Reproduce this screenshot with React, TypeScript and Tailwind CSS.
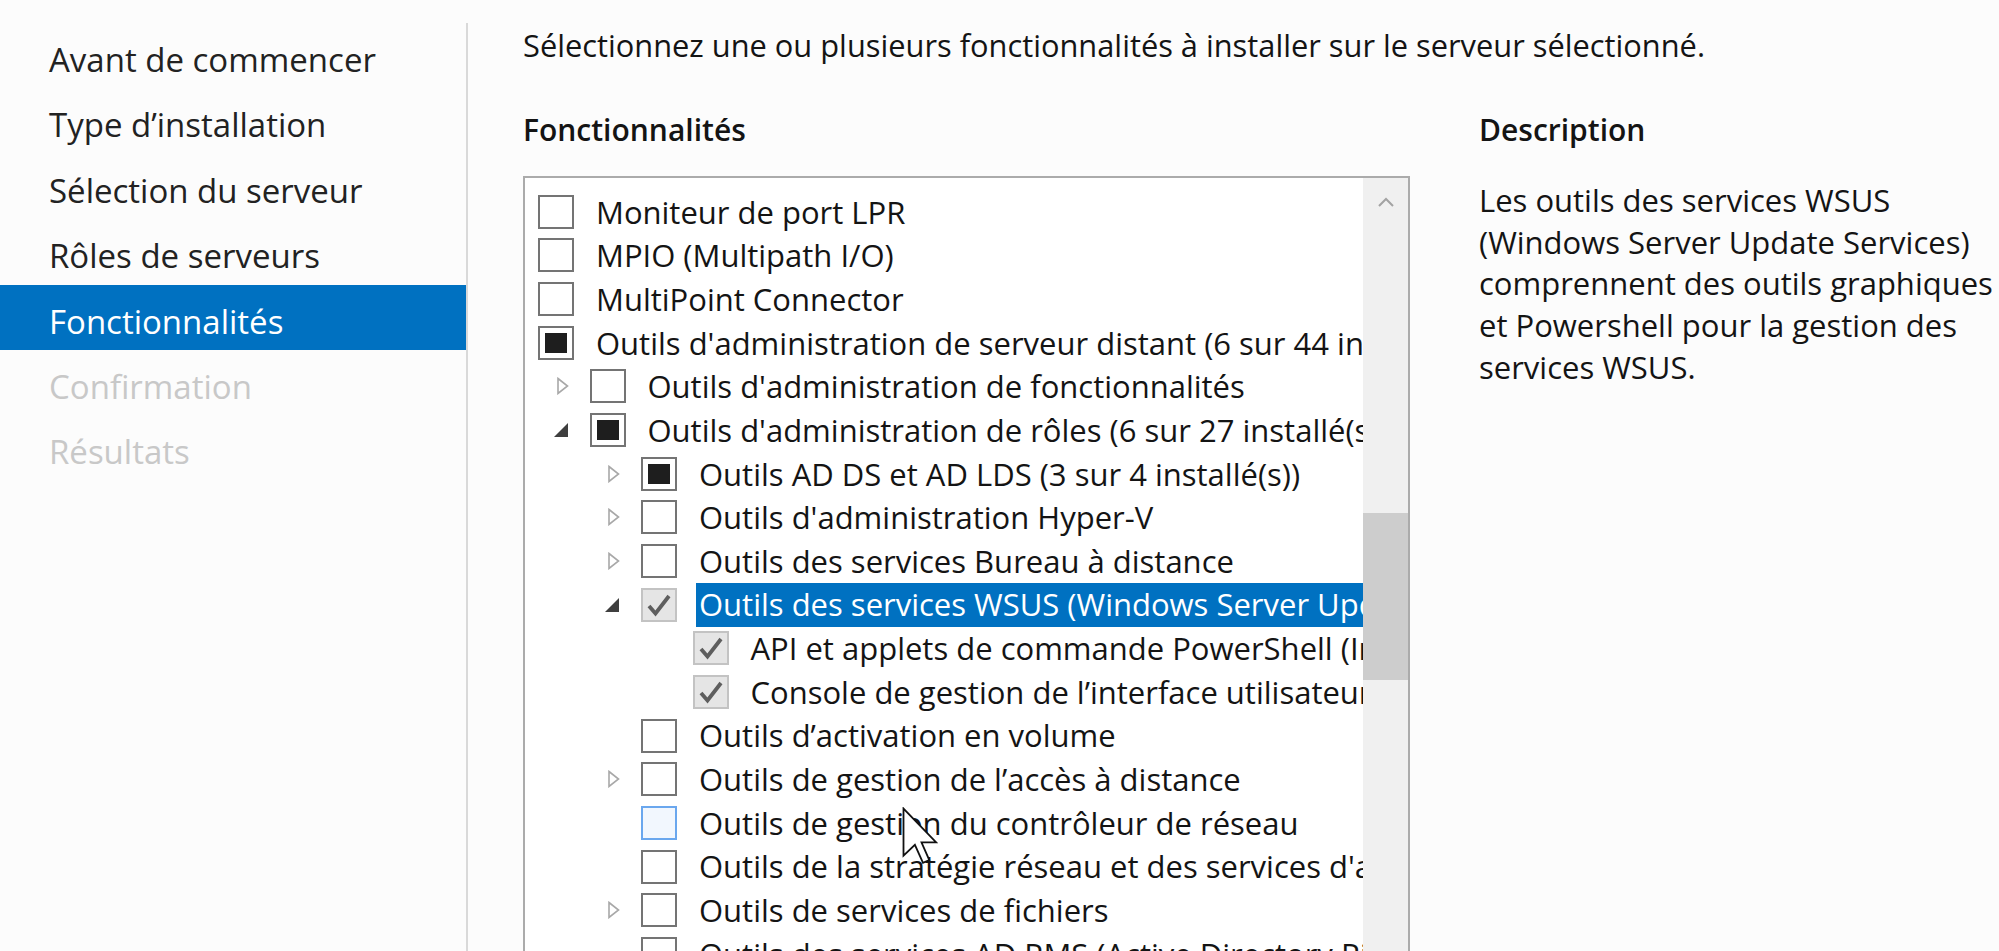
import React from "react";

type Arrow = "none" | "collapsed" | "expanded";
type State = "empty" | "indeterminate" | "checked" | "hover";

interface Row {
  level: 0 | 1 | 2 | 3;
  arrow: Arrow;
  state: State;
  text: string;
  selected?: boolean;
}

const rows: Row[] = [
  { level: 0, arrow: "none", state: "empty", text: "Moniteur de port LPR" },
  { level: 0, arrow: "none", state: "empty", text: "MPIO (Multipath I/O)" },
  { level: 0, arrow: "none", state: "empty", text: "MultiPoint Connector" },
  { level: 0, arrow: "none", state: "indeterminate", text: "Outils d'administration de serveur distant (6 sur 44 installé(s))" },
  { level: 1, arrow: "collapsed", state: "empty", text: "Outils d'administration de fonctionnalités" },
  { level: 1, arrow: "expanded", state: "indeterminate", text: "Outils d'administration de rôles (6 sur 27 installé(s))" },
  { level: 2, arrow: "collapsed", state: "indeterminate", text: "Outils AD DS et AD LDS (3 sur 4 installé(s))" },
  { level: 2, arrow: "collapsed", state: "empty", text: "Outils d'administration Hyper-V" },
  { level: 2, arrow: "collapsed", state: "empty", text: "Outils des services Bureau à distance" },
  { level: 2, arrow: "expanded", state: "checked", text: "Outils des services WSUS (Windows Server Update Services)", selected: true },
  { level: 3, arrow: "none", state: "checked", text: "API et applets de commande PowerShell (Installé)" },
  { level: 3, arrow: "none", state: "checked", text: "Console de gestion de l’interface utilisateur (Installé)" },
  { level: 2, arrow: "none", state: "empty", text: "Outils d’activation en volume" },
  { level: 2, arrow: "collapsed", state: "empty", text: "Outils de gestion de l’accès à distance" },
  { level: 2, arrow: "none", state: "hover", text: "Outils de gestion du contrôleur de réseau" },
  { level: 2, arrow: "none", state: "empty", text: "Outils de la stratégie réseau et des services d'accès" },
  { level: 2, arrow: "collapsed", state: "empty", text: "Outils de services de fichiers" },
  { level: 2, arrow: "none", state: "empty", text: "Outils des services AD RMS (Active Directory Rights Management Services)" },
];

const indentClass: Record<number, string> = {
  0: "w-0",
  1: "w-0",
  2: "w-[51.5px]",
  3: "w-[103px]",
};

function ArrowIcon({ arrow }: { arrow: Arrow }) {
  if (arrow === "collapsed") {
    return (
      <svg width="14" height="18" viewBox="0 0 14 18" className="block">
        <path d="M2 1.5 L11.5 9 L2 16.5 Z" fill="none" stroke="#a8a8a8" strokeWidth="1.6" strokeLinejoin="miter" />
      </svg>
    );
  }
  if (arrow === "expanded") {
    return (
      <svg width="18" height="18" viewBox="0 0 18 18" className="block">
        <path d="M16 2 L16 16 L2 16 Z" fill="#3f3f3f" />
      </svg>
    );
  }
  return null;
}

function CheckBox({ state }: { state: State }) {
  if (state === "checked") {
    return (
      <div className="w-[36px] h-[34px] shrink-0 border-2 border-[#c3c3c3] bg-[#e5e5e5] flex items-center justify-center">
        <svg width="30" height="28" viewBox="0 0 30 28">
          <polyline points="5,15 11.5,22.5 25,5" fill="none" stroke="#5e5e5e" strokeWidth="3.8" />
        </svg>
      </div>
    );
  }
  if (state === "indeterminate") {
    return (
      <div className="w-[36px] h-[34px] shrink-0 border-2 border-[#747474] bg-white flex items-center justify-center">
        <div className="w-[22px] h-[20px] bg-[#1e1e1e]" />
      </div>
    );
  }
  if (state === "hover") {
    return <div className="w-[36px] h-[34px] shrink-0 border-2 border-[#6aa7ee] bg-[#f2f7fe]" />;
  }
  return <div className="w-[36px] h-[34px] shrink-0 border-2 border-[#747474] bg-white" />;
}

function TreeRow({ row }: { row: Row }) {
  return (
    <div className="h-[43.67px] flex items-center pl-[13px] whitespace-nowrap">
      <div className={`${indentClass[row.level]} shrink-0`} />
      {row.level > 0 && (
        <div className="w-[51.5px] h-full shrink-0 flex items-center justify-end pr-[20px]">
          <ArrowIcon arrow={row.arrow} />
        </div>
      )}
      <CheckBox state={row.state} />
      <div
        className={`ml-[19px] pl-[3px] pr-[4px] h-full flex items-center ${
          row.selected ? "bg-[#0071c1] text-white" : "text-[#141414]"
        }`}
      >
        {row.text}
      </div>
    </div>
  );
}

const navItems = [
  { label: "Avant de commencer", state: "normal" },
  { label: "Type d’installation", state: "normal" },
  { label: "Sélection du serveur", state: "normal" },
  { label: "Rôles de serveurs", state: "normal" },
  { label: "Fonctionnalités", state: "active" },
  { label: "Confirmation", state: "disabled" },
  { label: "Résultats", state: "disabled" },
];

export default function App() {
  return (
    <div className="relative w-[1999px] h-[951px] overflow-hidden bg-[#fcfcfc] flex font-['Open_Sans','Noto_Sans',sans-serif]">
      {/* Left navigation */}
      <div className="w-[466px] shrink-0 pt-[23.5px] flex flex-col">
        {navItems.map((item) => (
          <div
            key={item.label}
            className={`h-[65.4px] flex items-center pt-[7px] pl-[49px] text-[33px] whitespace-nowrap ${
              item.state === "active"
                ? "bg-[#0071c1] text-white"
                : item.state === "disabled"
                ? "text-[#c8c8c8]"
                : "text-[#222222]"
            }`}
          >
            {item.label}
          </div>
        ))}
      </div>
      <div className="w-[2px] shrink-0 mt-[23px] bg-[#d9d9d9]" />

      {/* Main */}
      <div className="flex-1 pl-[55px] flex flex-col min-w-0">
        <div className="mt-[24px] h-[42px] flex items-center text-[30.8px] text-[#141414] whitespace-nowrap">
          Sélectionnez une ou plusieurs fonctionnalités à installer sur le serveur sélectionné.
        </div>
        <div className="mt-[42px] flex">
          <div className="w-[887px] shrink-0 flex flex-col">
            <div className="h-[42px] flex items-center text-[30px] font-semibold text-[#141414]">
              Fonctionnalités
            </div>
            <div className="mt-[26px] h-[820px] border-2 border-[#ababab] bg-white flex">
              <div className="flex-1 min-w-0 overflow-hidden pt-[12px] text-[31px]">
                {rows.map((r, i) => (
                  <TreeRow key={i} row={r} />
                ))}
              </div>
              <div className="w-[45px] shrink-0 bg-[#f0f0f0] flex flex-col">
                <div className="h-[48px] flex items-center justify-center">
                  <svg width="18" height="12" viewBox="0 0 18 12">
                    <polyline points="2,10 9,3 16,10" fill="none" stroke="#a3a3a3" strokeWidth="2" />
                  </svg>
                </div>
                <div className="mt-[287px] h-[167px] bg-[#cdcdcd]" />
              </div>
            </div>
          </div>
          <div className="ml-[69px] flex flex-col whitespace-nowrap text-[#141414]">
            <div className="h-[42px] flex items-center text-[30px] font-semibold">Description</div>
            <div className="mt-[30px] text-[31px] leading-[41.7px]">
              <div>Les outils des services WSUS</div>
              <div>(Windows Server Update Services)</div>
              <div>comprennent des outils graphiques</div>
              <div>et Powershell pour la gestion des</div>
              <div>services WSUS.</div>
            </div>
          </div>
        </div>
      </div>

      {/* Mouse cursor */}
      <svg
        className="absolute left-[902px] top-[807px]"
        width="36"
        height="58"
        viewBox="0 0 12 19.3"
      >
        <path
          d="M0.5 0.5 L0.5 16.2 L4.3 12.6 L7 18.6 L9.1 17.7 L6.5 11.8 L11.4 11.8 Z"
          fill="white"
          stroke="#111"
          strokeWidth="0.6"
          strokeLinejoin="miter"
        />
      </svg>
    </div>
  );
}
